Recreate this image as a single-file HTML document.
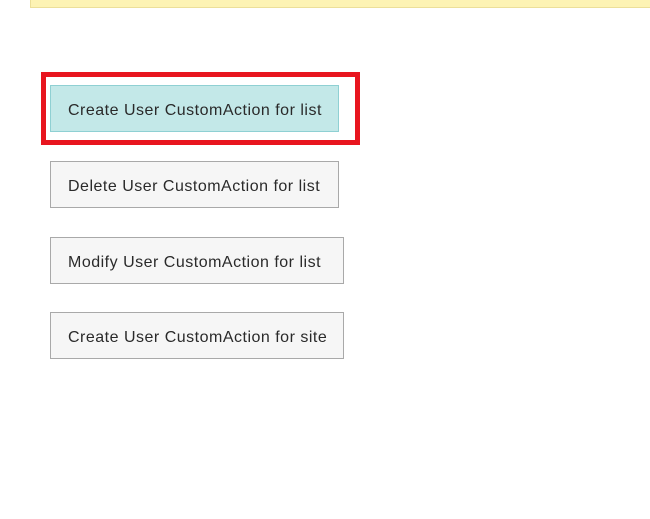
<!DOCTYPE html>
<html><head><style>
html,body{margin:0;padding:0;width:650px;height:519px;background:#fff;overflow:hidden;font-family:"Liberation Sans",sans-serif}
.bar{position:absolute;left:30px;top:0;width:620px;height:7px;background:#fdf3b4;border-bottom:1px solid #ecdf9a;border-left:1px solid #ecdf9a}
.red{position:absolute;left:41px;top:72px;width:309px;height:63px;border:5px solid #e8151f}
.btn{position:absolute;left:50px;box-sizing:border-box;height:47px;border:1px solid #a9a9a9;background:#f6f6f6;color:#2a2a2a;font-size:16px;display:flex;align-items:center;padding:4px 0 0 17px;letter-spacing:0.5px;white-space:nowrap}
</style></head><body>
<div class="bar"></div>
<div class="red"></div>
<div class="btn" style="top:85px;width:289px;background:#c3e8e8;border-color:#8fd0d3">Create User CustomAction for list</div>
<div class="btn" style="top:161px;width:289px">Delete User CustomAction for list</div>
<div class="btn" style="top:237px;width:294px">Modify User CustomAction for list</div>
<div class="btn" style="top:312px;width:294px">Create User CustomAction for site</div>
</body></html>
